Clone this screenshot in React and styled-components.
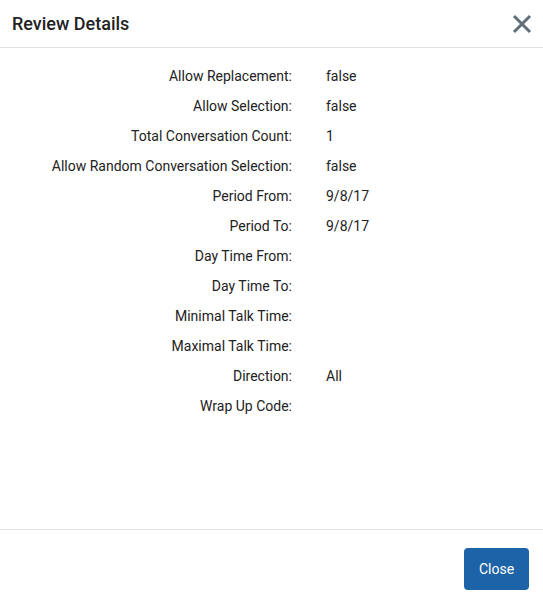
import React from 'react';
import styled, { createGlobalStyle } from 'styled-components';

const GlobalStyle = createGlobalStyle`
  html, body {
    margin: 0;
    padding: 0;
    background: #fff;
  }
  body {
    font-family: Roboto, "Liberation Sans", sans-serif;
    color: #222;
  }
`;

const Dialog = styled.div`
  width: 543px;
  height: 605px;
  display: flex;
  flex-direction: column;
  background: #fff;
`;

const Header = styled.div`
  height: 48px;
  display: flex;
  align-items: center;
  justify-content: space-between;
  padding: 0 12px;
  border-bottom: 1px solid #e3e3e3;
  box-sizing: border-box;
  flex: none;
`;

const Title = styled.h2`
  margin: 0 0 1px;
  font-size: 18px;
  font-weight: 500;
  color: #222;
`;

const CloseIcon = styled.button`
  border: none;
  background: none;
  padding: 0;
  width: 22px;
  height: 22px;
  margin-right: -2px;
  cursor: pointer;
  display: flex;
  align-items: center;
  justify-content: center;
  color: #5f6f78;
`;

const Body = styled.div`
  flex: 1;
  padding-top: 13px;
`;

const Details = styled.dl`
  margin: 0;
  display: grid;
  grid-template-columns: 292px 1fr;
  column-gap: 34px;
  grid-auto-rows: 30px;
  font-size: 14px;
  color: #222;
`;

const Label = styled.dt`
  text-align: right;
  line-height: 30px;
`;

const Value = styled.dd`
  margin: 0;
  line-height: 30px;
`;

const Footer = styled.div`
  height: 76px;
  border-top: 1px solid #e3e3e3;
  display: flex;
  align-items: flex-start;
  justify-content: flex-end;
  padding: 18px 14px 0 0;
  box-sizing: border-box;
  flex: none;
`;

const Button = styled.button`
  background: #1d63a7;
  color: #fff;
  border: none;
  border-radius: 4px;
  width: 65px;
  height: 42px;
  font-family: Roboto, "Liberation Sans", sans-serif;
  font-size: 14px;
  font-weight: 400;
  cursor: pointer;
`;

const rows = [
  ['Allow Replacement:', 'false'],
  ['Allow Selection:', 'false'],
  ['Total Conversation Count:', '1'],
  ['Allow Random Conversation Selection:', 'false'],
  ['Period From:', '9/8/17'],
  ['Period To:', '9/8/17'],
  ['Day Time From:', ''],
  ['Day Time To:', ''],
  ['Minimal Talk Time:', ''],
  ['Maximal Talk Time:', ''],
  ['Direction:', 'All'],
  ['Wrap Up Code:', ''],
];

export default function App() {
  return (
    <>
      <GlobalStyle />
      <Dialog>
        <Header>
          <Title>Review Details</Title>
          <CloseIcon aria-label="close">
            <svg width="20" height="20" viewBox="0 0 20 20">
              <path d="M2 2 L18 18 M18 2 L2 18" stroke="currentColor" strokeWidth="3" fill="none" />
            </svg>
          </CloseIcon>
        </Header>
        <Body>
          <Details>
            {rows.map(([label, value]) => (
              <React.Fragment key={label}>
                <Label>{label}</Label>
                <Value>{value}</Value>
              </React.Fragment>
            ))}
          </Details>
        </Body>
        <Footer>
          <Button>Close</Button>
        </Footer>
      </Dialog>
    </>
  );
}
